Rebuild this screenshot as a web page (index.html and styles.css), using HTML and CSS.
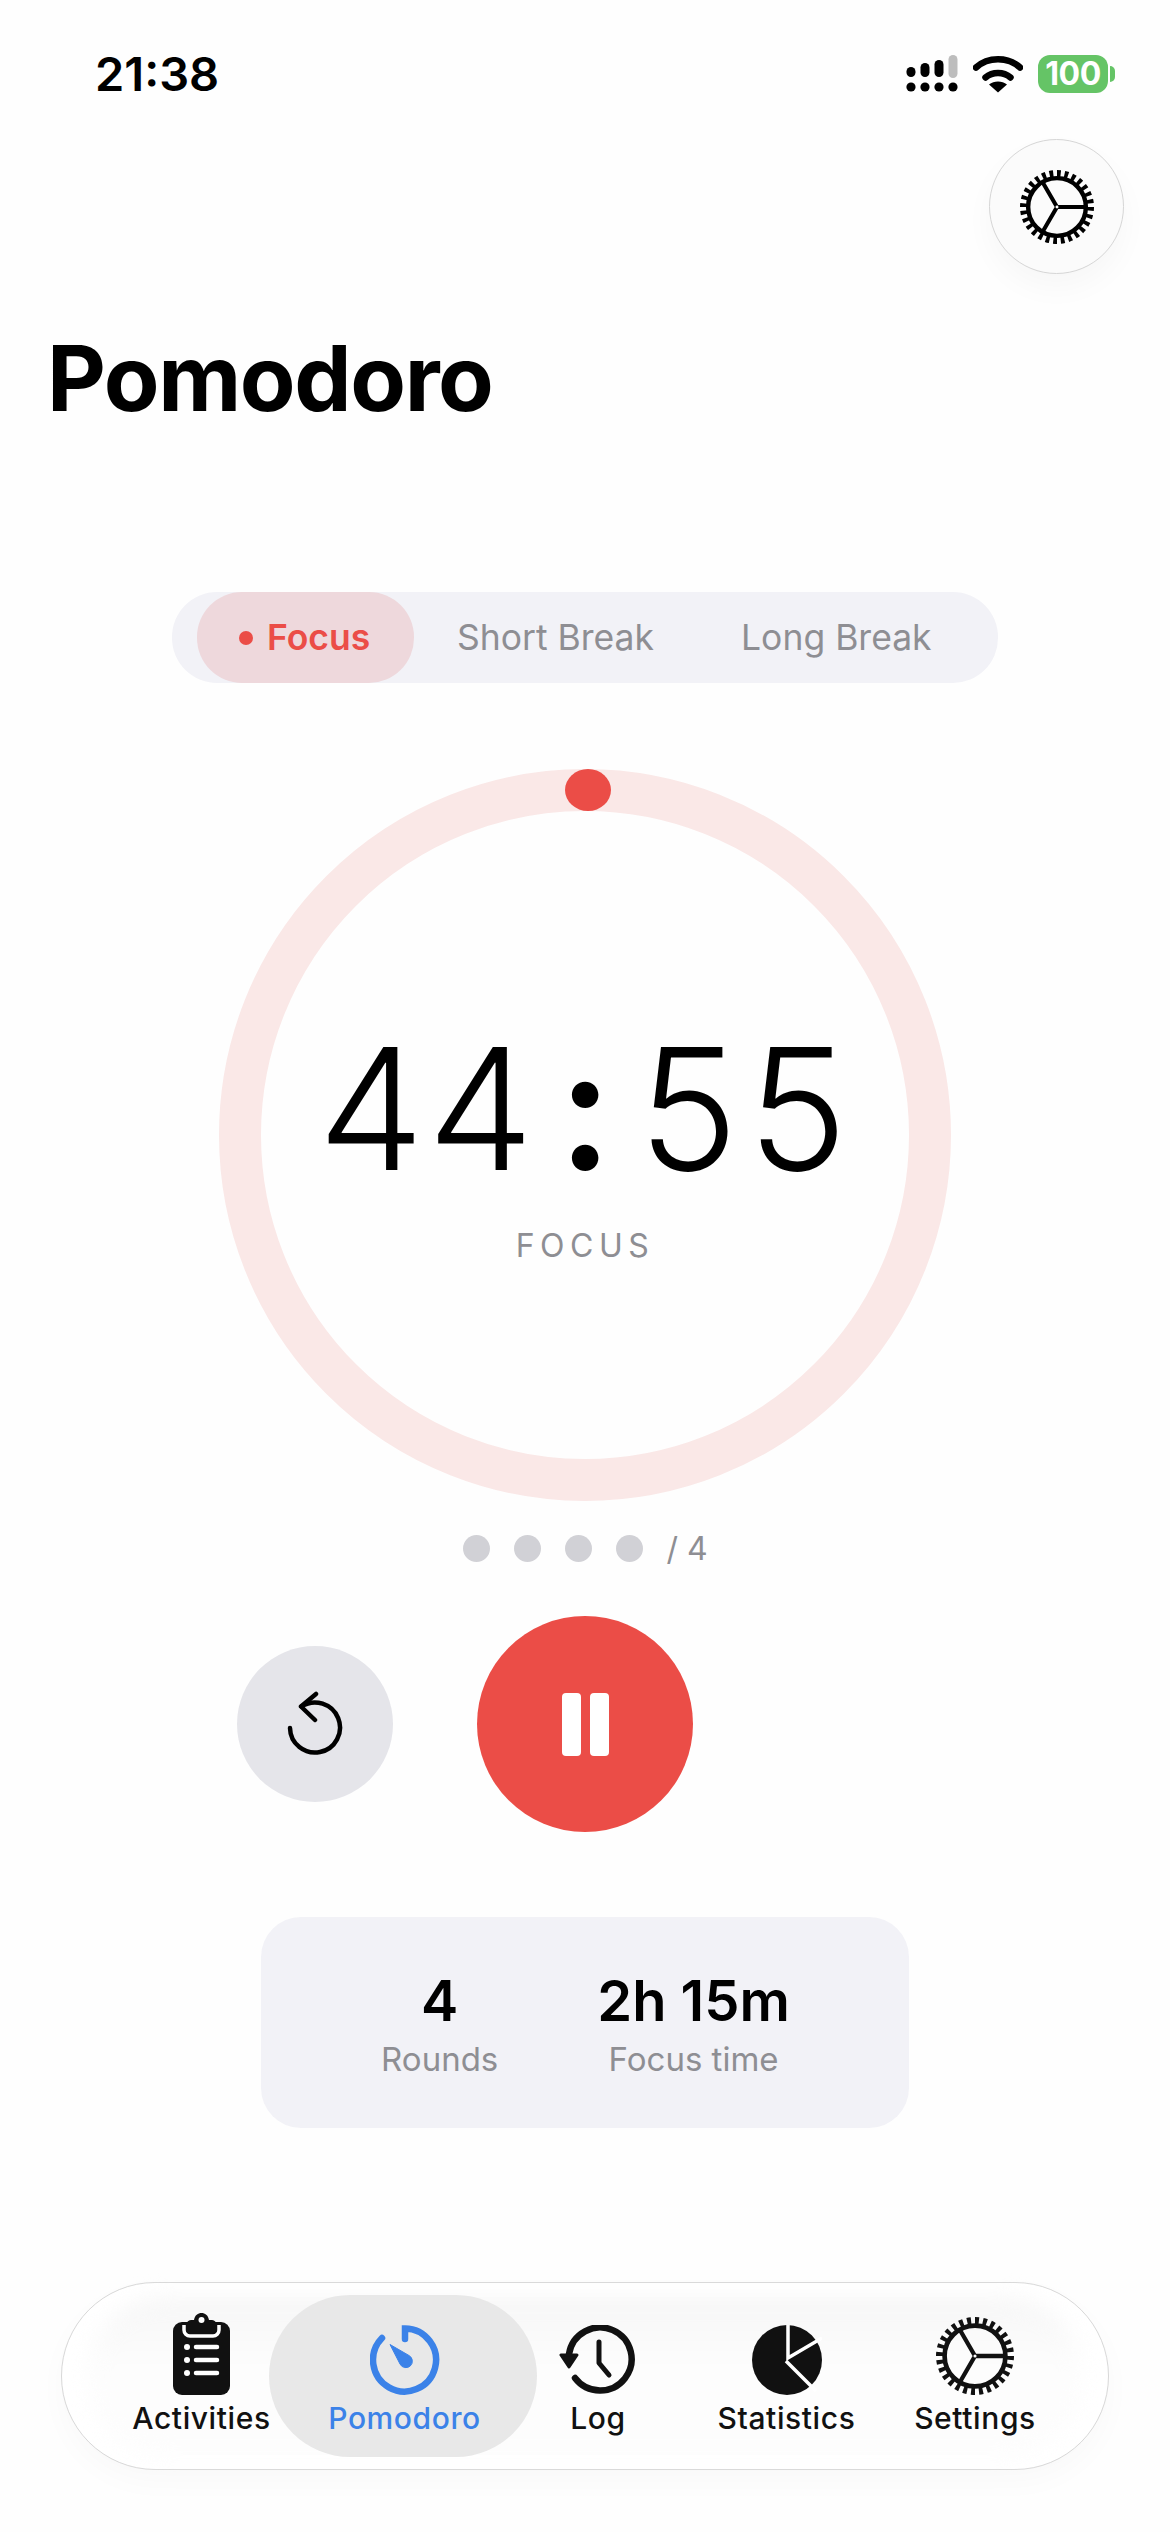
FILE: index.html
```html
<!DOCTYPE html>
<html lang="en">
<head>
    <meta charset="UTF-8">
    <title>Pomodoro</title>
    <link rel="stylesheet" href="styles.css">
</head>
<body>
    <svg class="icon-defs" width="0" height="0">
        <symbol id="gear" viewBox="0 0 100 100">
            <circle cx="50" cy="50" r="45" fill="none" stroke="currentColor" stroke-width="10" pathLength="280" stroke-dasharray="5 5"></circle>
            <circle cx="50" cy="50" r="39" fill="none" stroke="currentColor" stroke-width="6"></circle>
            <path d="M50 50H90M50 50L30 84.6M50 50L30 15.4" fill="none" stroke="currentColor" stroke-width="5.5"></path>
            <circle cx="50" cy="50" r="2" fill="#fff"></circle>
        </symbol>
    </svg>

    <div class="status-bar">
        <span class="status-time">21:38</span>
        <div class="status-icons">
            <svg class="signal" width="52" height="38" viewBox="0 0 52 38">
                <g fill="#000">
                    <circle cx="5" cy="32" r="4.6"></circle>
                    <circle cx="19" cy="32" r="4.6"></circle>
                    <circle cx="33" cy="32" r="4.6"></circle>
                    <circle cx="47" cy="32" r="4.6"></circle>
                    <rect x="0.5" y="12" width="9" height="10" rx="4.5"></rect>
                    <rect x="14.5" y="8" width="9" height="14" rx="4.5"></rect>
                    <rect x="28.5" y="5" width="9" height="17" rx="4.5"></rect>
                </g>
                <rect x="42.5" y="0" width="9" height="23" rx="4.5" fill="#bdbdbd"></rect>
            </svg>
            <svg class="wifi" width="50" height="38" viewBox="0 0 50 38">
                <path d="M3 12.5C15 1.5 35 1.5 47 12.5" fill="none" stroke="#000" stroke-width="6.5" stroke-linecap="round"></path>
                <path d="M12.5 22.5C19.500 16.500 30.500 16.500 37.500 22.500" fill="none" stroke="#000" stroke-width="6.5" stroke-linecap="round"></path>
                <path d="M16 29.500C21 25.500 29 25.500 34 29.500L25 37.500Z" fill="#000"></path>
            </svg>
            <div class="battery"><span class="battery-level">100</span></div>
        </div>
    </div>

    <div class="top-actions">
        <button class="round-settings">
            <svg class="round-settings-icon" width="74" height="74"><use href="#gear"></use></svg>
        </button>
    </div>

    <h1 class="page-title">Pomodoro</h1>

    <div class="mode-row">
        <div class="mode-switch">
            <div class="mode-tab mode-tab-active"><span class="mode-dot"></span>Focus</div>
            <div class="mode-tab mode-tab-short">Short Break</div>
            <div class="mode-tab mode-tab-long">Long Break</div>
        </div>
    </div>

    <div class="ring">
        <div class="ring-thumb"></div>
        <div class="timer"><span>44</span><span class="timer-sep">:</span><span>55</span></div>
        <div class="timer-label">FOCUS</div>
    </div>

    <div class="round-dots">
        <span class="round-dot"></span>
        <span class="round-dot"></span>
        <span class="round-dot"></span>
        <span class="round-dot"></span>
        <span class="round-total">/ 4</span>
    </div>

    <div class="controls">
        <button class="reset-btn">
            <svg width="56" height="66" viewBox="0 0 56 66">
                <path d="M14.500 15.500A25 25 0 1 1 3 37" fill="none" stroke="#000" stroke-width="4.500" stroke-linecap="round"></path>
                <path d="M29 3L14 15.500L28 29" fill="none" stroke="#000" stroke-width="4.500" stroke-linecap="round" stroke-linejoin="round"></path>
            </svg>
        </button>
        <button class="pause-btn">
            <span class="pause-bar"></span>
            <span class="pause-bar"></span>
        </button>
        <div class="controls-spacer"></div>
    </div>

    <div class="stats-row">
        <div class="stats-card">
            <div class="stat">
                <div class="stat-value">4</div>
                <div class="stat-label">Rounds</div>
            </div>
            <div class="stat">
                <div class="stat-value">2h 15m</div>
                <div class="stat-label">Focus time</div>
            </div>
        </div>
    </div>

    <nav class="tab-bar">
        <div class="tab-item">
            <svg class="tab-icon" width="57" height="82" viewBox="0 0 57 82">
                <rect x="0" y="9" width="57" height="73" rx="9" fill="#111"></rect>
                <path d="M11 12V17A6 6 0 0 0 17 23H40A6 6 0 0 0 46 17V12" fill="none" stroke="#fff" stroke-width="3.500"></path>
                <path d="M14 17V11C14 8 16 7 19 7H21C22 2 25 0 28.500 0C32 0 35 2 36 7H38C41 7 43 8 43 11V17C43 19 42 20 40 20H17C15 20 14 19 14 17Z" fill="#111"></path>
                <circle cx="28.500" cy="7" r="3" fill="#fff"></circle>
                <g fill="#fff">
                    <circle cx="14" cy="34" r="3"></circle>
                    <circle cx="14" cy="47" r="3"></circle>
                    <circle cx="14" cy="60" r="3"></circle>
                </g>
                <path d="M23 34H44M23 47H44M23 60H44" stroke="#fff" stroke-width="4.500" stroke-linecap="round"></path>
            </svg>
            <span class="tab-text">Activities</span>
        </div>
        <div class="tab-item tab-item-active">
            <svg class="tab-icon" width="70" height="70" viewBox="0 0 70 70">
                <path d="M35 14V3.500A31.500 31.500 0 1 1 12 13" fill="none" stroke="#3b82e8" stroke-width="6.500" stroke-linecap="round"></path>
                <path d="M20 19.500L39 30.500A6.500 6.500 0 1 1 30 39Z" fill="#3b82e8" stroke="#3b82e8" stroke-width="1" stroke-linejoin="round"></path>
            </svg>
            <span class="tab-text">Pomodoro</span>
        </div>
        <div class="tab-item">
            <svg class="tab-icon tab-icon-log" width="76" height="70" viewBox="0 0 76 70">
                <path d="M16 53A31.500 31.500 0 1 0 10 29" fill="none" stroke="#111" stroke-width="6.500" stroke-linecap="round"></path>
                <path d="M2 30H18L10 42Z" fill="#111" stroke="#111" stroke-width="3" stroke-linejoin="round"></path>
                <path d="M40 17V38L50 50" fill="none" stroke="#111" stroke-width="5" stroke-linecap="round" stroke-linejoin="round"></path>
            </svg>
            <span class="tab-text">Log</span>
        </div>
        <div class="tab-item">
            <svg class="tab-icon" width="70" height="70" viewBox="0 0 70 70">
                <circle cx="35" cy="35" r="35" fill="#111"></circle>
                <path d="M36 -1V33L70 13M34 36L64 66" fill="none" stroke="#fff" stroke-width="3.500"></path>
            </svg>
            <span class="tab-text">Statistics</span>
        </div>
        <div class="tab-item">
            <svg class="tab-icon" width="78" height="78"><use href="#gear"></use></svg>
            <span class="tab-text">Settings</span>
        </div>
    </nav>
</body>
</html>
```

FILE: styles.css
```css
* {
    box-sizing: border-box;
}

body {
    font-family: "Inter", "Liberation Sans", sans-serif;
    background-color: #fefefe;
    color: #000;
    margin: 0;
    width: 1170px;
    height: 2532px;
    overflow: hidden;
}

button {
    border: none;
    padding: 0;
    cursor: pointer;
}

.icon-defs {
    display: block;
    height: 0;
}

.status-bar {
    display: flex;
    justify-content: space-between;
    align-items: center;
    height: 139px;
    padding: 8px 62px 0 95px;
}

.status-time {
    font-size: 47px;
    font-weight: 600;
    line-height: 1;
}

.status-icons {
    display: flex;
    align-items: center;
    gap: 15px;
    color: #000;
}

.battery {
    position: relative;
    width: 70px;
    height: 38px;
    border-radius: 12px;
    background: #65c466;
    text-align: center;
}

.battery::after {
    content: "";
    position: absolute;
    right: -7px;
    top: 11px;
    width: 5px;
    height: 16px;
    border-radius: 0 8px 8px 0;
    background: #65c466;
}

.battery-level {
    color: #fff;
    font-size: 32px;
    font-weight: 700;
    line-height: 38px;
    letter-spacing: -0.5px;
}

.top-actions {
    display: flex;
    justify-content: flex-end;
    padding-right: 46px;
}

.round-settings {
    display: flex;
    align-items: center;
    justify-content: center;
    width: 135px;
    height: 135px;
    border: 1.5px solid #d6d6d6;
    border-radius: 50%;
    background: #fbfbfb;
    color: #000;
    box-shadow: 0 14px 30px rgba(0, 0, 0, 0.03);
}

.page-title {
    font-size: 91px;
    font-weight: 700;
    line-height: 100px;
    margin: 54px 0 0 47px;
    letter-spacing: -1.4px;
}

.mode-row {
    display: flex;
    justify-content: center;
    margin-top: 164px;
}

.mode-switch {
    display: flex;
    align-items: center;
    width: 826px;
    height: 91px;
    padding-left: 25px;
    border-radius: 45px;
    background: #f2f2f7;
}

.mode-tab {
    display: flex;
    align-items: center;
    height: 91px;
    font-size: 35.5px;
    color: #8e8e93;
}

.mode-tab-active {
    width: 217px;
    padding-left: 42px;
    border-radius: 45px;
    background: #eed8dc;
    color: #eb4d47;
    font-weight: 600;
}

.mode-tab-short {
    margin-left: 43px;
}

.mode-tab-long {
    margin-left: 87px;
}

.mode-dot {
    width: 14px;
    height: 14px;
    margin-right: 14px;
    border-radius: 50%;
    background: #eb4d47;
}

.ring {
    position: relative;
    display: flex;
    flex-direction: column;
    align-items: center;
    width: 732px;
    height: 732px;
    margin: 86px auto 0;
    padding-top: 213px;
    border: 42px solid #fae8e7;
    border-radius: 50%;
}

.ring-thumb {
    position: absolute;
    top: -42px;
    left: 304px;
    width: 46px;
    height: 42px;
    border-radius: 50%;
    background: #eb4d47;
}

.timer {
    display: flex;
    font-size: 169px;
    font-weight: 300;
    line-height: 1;
    font-feature-settings: "tnum";
}

.timer-sep {
    font-weight: 600;
    margin: 0 27px;
}

.timer-label {
    margin-top: 33px;
    font-size: 32px;
    letter-spacing: 5.5px;
    color: #8e8e93;
}

.round-dots {
    display: flex;
    align-items: center;
    justify-content: center;
    gap: 24px;
    height: 27px;
    margin-top: 34px;
    padding-left: 1px;
}

.round-dot {
    width: 27px;
    height: 27px;
    border-radius: 50%;
    background: #d1d1d6;
}

.round-total {
    margin-left: -1px;
    font-size: 32px;
    color: #8e8e93;
}

.controls {
    display: flex;
    align-items: center;
    justify-content: center;
    gap: 84px;
    margin-top: 54px;
}

.reset-btn {
    display: flex;
    align-items: center;
    justify-content: center;
    width: 156px;
    height: 156px;
    border-radius: 50%;
    background: #e5e5ea;
}

.pause-btn {
    display: flex;
    align-items: center;
    justify-content: center;
    gap: 9px;
    width: 216px;
    height: 216px;
    border-radius: 50%;
    background: #eb4d47;
}

.pause-bar {
    width: 19px;
    height: 63px;
    border-radius: 4px;
    background: #fff;
}

.controls-spacer {
    width: 156px;
}

.stats-row {
    display: flex;
    justify-content: center;
    margin-top: 85px;
}

.stats-card {
    display: flex;
    justify-content: center;
    gap: 99px;
    width: 648px;
    height: 211px;
    padding: 50px 0 0 1px;
    border-radius: 40px;
    background: #f2f2f7;
}

.stat {
    display: flex;
    flex-direction: column;
    align-items: center;
}

.stat-value {
    font-size: 56px;
    font-weight: 600;
    line-height: 68px;
}

.stat-label {
    margin-top: 2px;
    font-size: 33px;
    line-height: 44px;
    color: #8e8e93;
}

.tab-bar {
    position: relative;
    display: grid;
    grid-template-columns: 135px 268px 122px 255px 122px;
    align-items: center;
    width: 1048px;
    height: 188px;
    margin: 154px 0 0 61px;
    padding-left: 72px;
    border: 1.5px solid #d8d8d8;
    border-radius: 94px;
    background: #fff;
    box-shadow: 0 12px 30px rgba(0, 0, 0, 0.025);
}

.tab-bar::before {
    content: "";
    position: absolute;
    inset: 14px 24px;
    border-radius: 80px;
    background: linear-gradient(#f6f6f6, #fdfdfd 45%);
    filter: blur(10px);
    pointer-events: none;
}

.tab-item {
    position: relative;
    display: flex;
    flex-direction: column;
    align-items: center;
    justify-content: flex-end;
    height: 162px;
    padding-bottom: 21px;
    color: #111;
}

.tab-item-active {
    padding-left: 3px;
    border-radius: 81px;
    background: #e8e8e8;
    color: #3b82e8;
}

.tab-icon {
    display: block;
}

.tab-icon-log {
    margin-right: 3px;
}

.tab-text {
    margin-top: 5px;
    font-size: 30px;
    font-weight: 500;
    line-height: 36px;
    letter-spacing: 0.6px;
    white-space: nowrap;
}
```
